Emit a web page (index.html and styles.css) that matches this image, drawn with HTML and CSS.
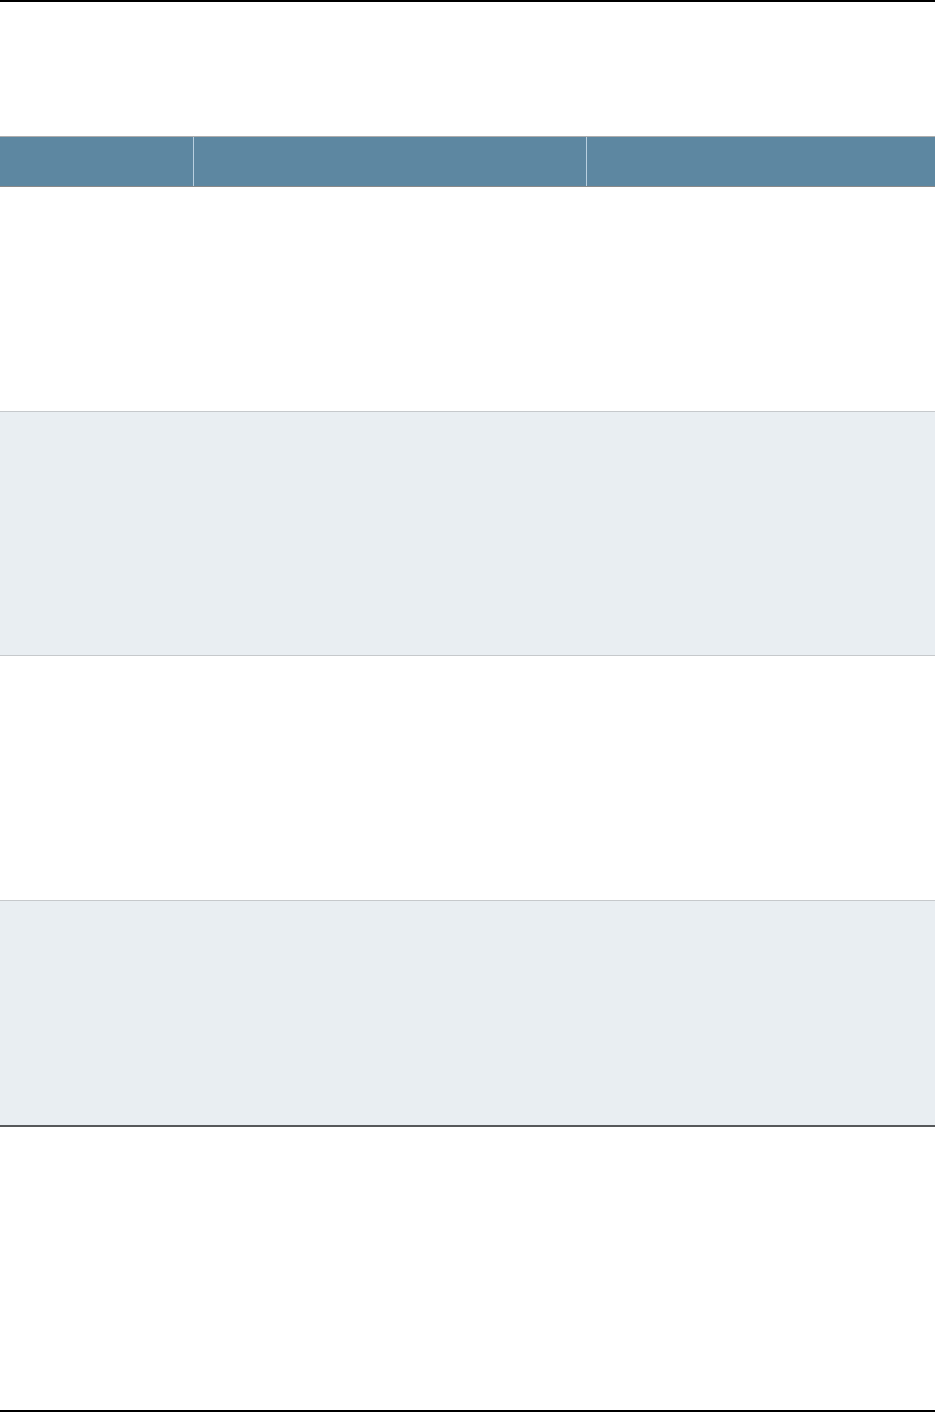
FILE: index.html
```html
<!DOCTYPE html>
<html>
<head>
<meta charset="utf-8">
<link rel="stylesheet" href="styles.css">
</head>
<body>
<div class="page">
  <div class="top-rule"></div>
  <div class="table">
    <div class="row head">
      <div class="cell c1"></div>
      <div class="cell c2"></div>
      <div class="cell c3"></div>
    </div>
    <div class="row body r1">
      <div class="cell c1"></div>
      <div class="cell c2"></div>
      <div class="cell c3"></div>
    </div>
    <div class="row body alt r2">
      <div class="cell c1"></div>
      <div class="cell c2"></div>
      <div class="cell c3"></div>
    </div>
    <div class="row body r3">
      <div class="cell c1"></div>
      <div class="cell c2"></div>
      <div class="cell c3"></div>
    </div>
    <div class="row body alt r4 last">
      <div class="cell c1"></div>
      <div class="cell c2"></div>
      <div class="cell c3"></div>
    </div>
  </div>
  <div class="spacer"></div>
  <div class="bottom-rule"></div>
</div>
</body>
</html>
```
FILE: styles.css
```css
html, body {
  margin: 0;
  padding: 0;
  background: #ffffff;
  font-family: "Liberation Sans", Arial, sans-serif;
}
.page {
  width: 937px;
  height: 1413px;
  display: flex;
  flex-direction: column;
}
.top-rule {
  width: 935px;
  height: 2px;
  background: #000000;
  flex: none;
}
.table {
  margin-top: 134px;
  width: 935px;
  display: flex;
  flex-direction: column;
  flex: none;
}
.row {
  display: grid;
  grid-template-columns: 193px 392px 348px;
  column-gap: 1px;
}
.head {
  background: #5d87a1;
  border-top: 1px solid #aeaeae;
  border-bottom: 1px solid #8a8a8a;
  height: 49px;
}
.head .cell + .cell {
  border-left: 1px solid #b9d0e0;
}
.head .c2 {
  border-left-color: #a9c4d6;
}
.head .c3 {
  border-left-color: #f2f5f7;
}
.head {
  column-gap: 0;
  grid-template-columns: 193px 393px 349px;
}
.body {
  border-bottom: 1px solid #c6c9cc;
}
.r1 { height: 224px; }
.r2 { height: 243px; }
.r3 { height: 244px; }
.r4 { height: 224px; }
.alt {
  background: #e9eef2;
}
.last {
  border-bottom: 2px solid #56585a;
}
.spacer {
  flex: 1;
}
.bottom-rule {
  width: 935px;
  height: 2px;
  background: #000000;
  margin-bottom: 1px;
  flex: none;
}
```
